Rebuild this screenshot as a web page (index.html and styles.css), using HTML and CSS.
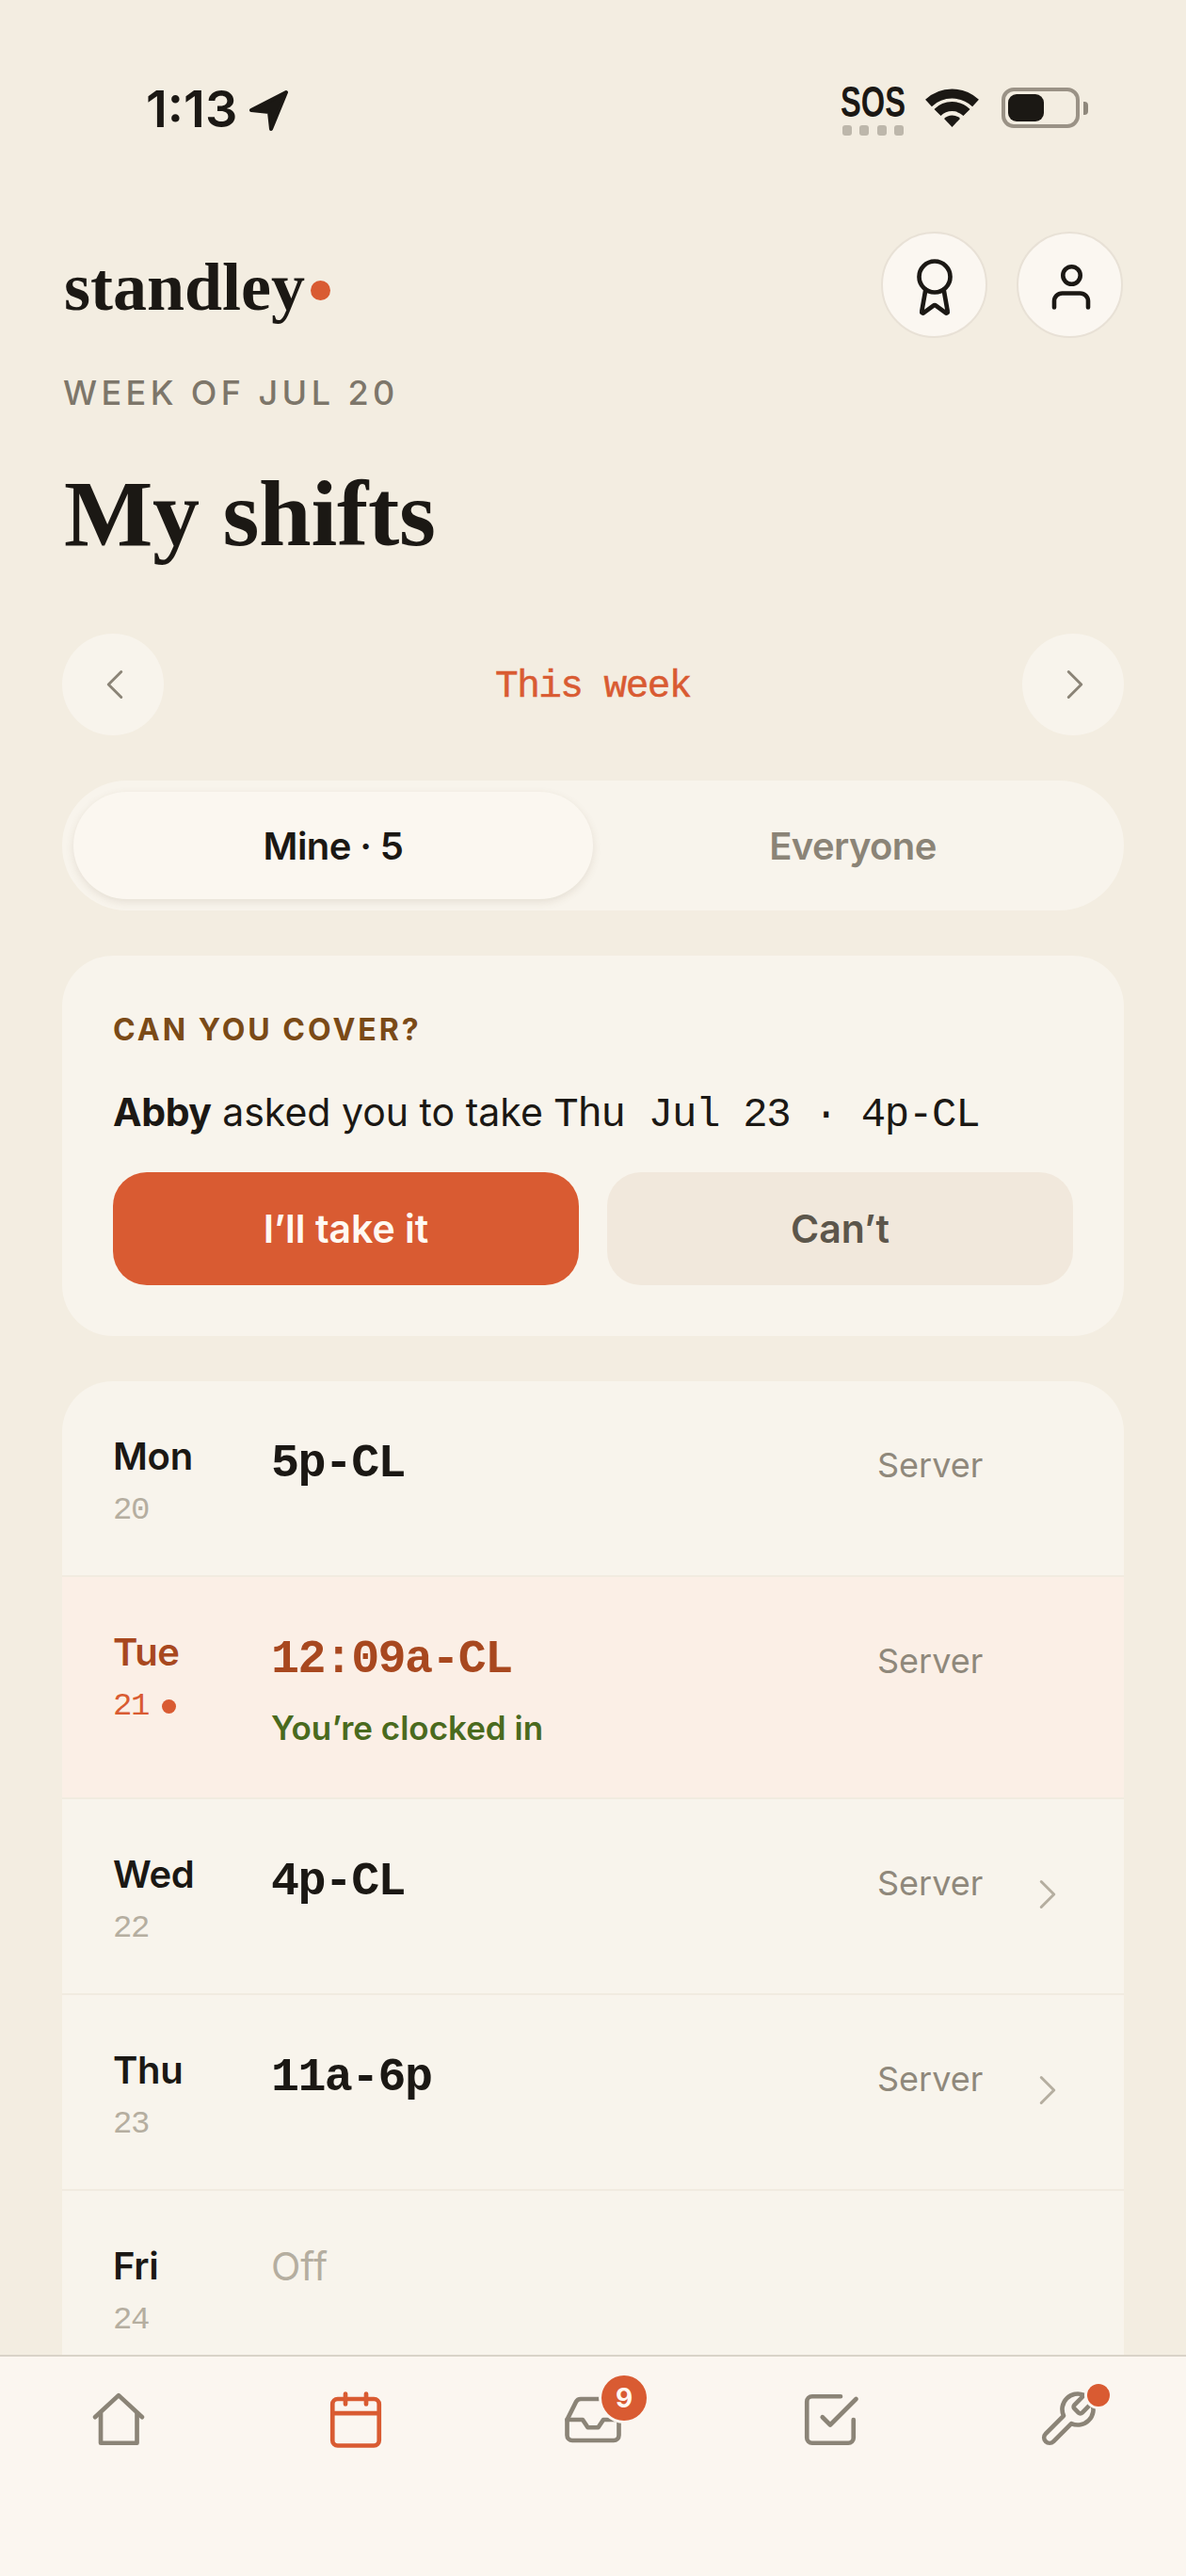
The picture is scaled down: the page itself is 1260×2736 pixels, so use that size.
FILE: index.html
```html
<!DOCTYPE html>
<html lang="en">
<head>
<meta charset="UTF-8">
<meta name="viewport" content="width=device-width, initial-scale=1.0">
<title>My shifts</title>
<link rel="stylesheet" href="styles.css">
</head>
<body>
<div class="screen">
    <div class="content">
        <!-- status bar -->
        <div class="status">
            <div class="status-left">
                <span class="clock">1:13</span>
                <svg class="loc" width="44" height="44" viewBox="0 0 44 44"><path d="M40 3 3 22l19 2 2 18z" fill="#1b1814" stroke="#1b1814" stroke-width="4" stroke-linejoin="round"/></svg>
            </div>
            <div class="status-right">
                <div class="sos">
                    <span class="sos-text">SOS</span>
                    <div class="sos-dots"><i></i><i></i><i></i><i></i></div>
                </div>
                <svg class="wifi" width="57" height="42" viewBox="0 0 57 42" fill="none" stroke="#1b1814" stroke-width="10">
                    <path d="M3.5 16.5A36.5 36.5 0 0 1 53.5 16.5"/>
                    <path d="M13 26.5A22 22 0 0 1 44 26.5"/>
                    <path d="M28.5 42 20 33A12 12 0 0 1 37 33z" fill="#1b1814" stroke="none"/>
                </svg>
                <div class="battery"><div class="battery-fill"></div></div>
                <div class="battery-cap"></div>
            </div>
        </div>

        <div class="page">
            <div class="header">
                <div class="logo">standley<span class="logo-dot"></span></div>
                <div class="header-btns">
                    <div class="round-btn">
                        <svg class="award" width="66" height="66" viewBox="0 0 24 24" fill="none" stroke="#1b1814" stroke-width="1.7" stroke-linecap="round" stroke-linejoin="round">
                            <circle cx="12" cy="8" r="6"/>
                            <path d="m15.5 12.9 1.5 8.5a.5.5 0 0 1-.8.5l-3.6-2.7a1 1 0 0 0-1.2 0l-3.6 2.7a.5.5 0 0 1-.8-.5l1.5-8.5"/>
                        </svg>
                    </div>
                    <div class="round-btn">
                        <svg width="66" height="66" viewBox="0 0 66 66" fill="none" stroke="#1b1814" stroke-width="4.6" stroke-linecap="round">
                            <circle cx="34.5" cy="22.5" r="9.2"/>
                            <path d="M16 56.500v-6.500a8.500 8.500 0 0 1 8.500-8.500h19a8.500 8.500 0 0 1 8.500 8.500v6.500"/>
                        </svg>
                    </div>
                </div>
            </div>

            <div class="eyebrow">WEEK OF JUL 20</div>
            <h1 class="title">My shifts</h1>

            <div class="week-nav">
                <div class="arrow-btn">
                    <svg width="54" height="54" viewBox="0 0 24 24" fill="none" stroke="#8b8477" stroke-width="1.33" stroke-linecap="round" stroke-linejoin="round"><path d="m15 18-6-6 6-6"/></svg>
                </div>
                <span class="week-label">This week</span>
                <div class="arrow-btn">
                    <svg width="54" height="54" viewBox="0 0 24 24" fill="none" stroke="#8b8477" stroke-width="1.33" stroke-linecap="round" stroke-linejoin="round"><path d="m9 18 6-6-6-6"/></svg>
                </div>
            </div>

            <div class="segment">
                <div class="seg-item active">Mine · 5</div>
                <div class="seg-item">Everyone</div>
            </div>

            <div class="cover-card">
                <div class="cover-title">CAN YOU COVER?</div>
                <p class="cover-text"><b>Abby</b> asked you to take <span class="mono">Thu Jul 23 · 4p-CL</span></p>
                <div class="cover-btns">
                    <div class="btn btn-primary">I’ll take it</div>
                    <div class="btn btn-soft">Can’t</div>
                </div>
            </div>

            <div class="list">
                <div class="row">
                    <div class="day"><div class="day-name">Mon</div><div class="day-num">20</div></div>
                    <div class="shift"><div class="time">5p-CL</div></div>
                    <div class="role">Server</div>
                    <div class="chev"></div>
                </div>
                <div class="row today">
                    <div class="day"><div class="day-name">Tue</div><div class="day-num">21<span class="today-dot"></span></div></div>
                    <div class="shift"><div class="time">12:09a-CL</div><div class="note">You’re clocked in</div></div>
                    <div class="role">Server</div>
                    <div class="chev"></div>
                </div>
                <div class="row">
                    <div class="day"><div class="day-name">Wed</div><div class="day-num">22</div></div>
                    <div class="shift"><div class="time">4p-CL</div></div>
                    <div class="role">Server</div>
                    <div class="chev"><svg width="54" height="54" viewBox="0 0 24 24" fill="none" stroke="#b5aea0" stroke-width="1.33" stroke-linecap="round" stroke-linejoin="round"><path d="m9 18 6-6-6-6"/></svg></div>
                </div>
                <div class="row">
                    <div class="day"><div class="day-name">Thu</div><div class="day-num">23</div></div>
                    <div class="shift"><div class="time">11a-6p</div></div>
                    <div class="role">Server</div>
                    <div class="chev"><svg width="54" height="54" viewBox="0 0 24 24" fill="none" stroke="#b5aea0" stroke-width="1.33" stroke-linecap="round" stroke-linejoin="round"><path d="m9 18 6-6-6-6"/></svg></div>
                </div>
                <div class="row">
                    <div class="day"><div class="day-name">Fri</div><div class="day-num">24</div></div>
                    <div class="shift"><div class="off">Off</div></div>
                    <div class="role"></div>
                    <div class="chev"></div>
                </div>
            </div>
        </div>
    </div>

    <!-- bottom tabs -->
    <div class="tabs">
        <div class="tab">
            <svg width="66" height="66" viewBox="0 0 24 24" fill="none" stroke="#8b8477" stroke-width="1.7" stroke-linecap="round" stroke-linejoin="round"><path d="M2.900 11 12 2.600 21.100 11"/><path d="M5.100 9.500V21h14V9.500"/></svg>
        </div>
        <div class="tab">
            <svg width="66" height="66" viewBox="0 0 24 24" fill="none" stroke="#d95b32" stroke-width="1.7" stroke-linecap="round" stroke-linejoin="round"><rect x="3" y="4" width="18" height="18" rx="2"/><path d="M16 2v4M8 2v4M3 9.500h18"/></svg>
        </div>
        <div class="tab">
            <svg width="66" height="66" viewBox="0 0 24 24" fill="none" stroke="#8b8477" stroke-width="1.7" stroke-linecap="round" stroke-linejoin="round"><path d="M22 12h-6l-2 3h-4l-2-3H2"/><path d="M5.450 5.110 2 12v6a2 2 0 0 0 2 2h16a2 2 0 0 0 2-2v-6l-3.450-6.890A2 2 0 0 0 16.760 4H7.240a2 2 0 0 0-1.790 1.110z"/></svg>
            <span class="badge">9</span>
        </div>
        <div class="tab">
            <svg width="66" height="66" viewBox="0 0 24 24" fill="none" stroke="#8b8477" stroke-width="1.7" stroke-linecap="round" stroke-linejoin="round"><path d="m9 11 3 3L22 4"/><path d="M21 12v7a2 2 0 0 1-2 2H5a2 2 0 0 1-2-2V5a2 2 0 0 1 2-2h11"/></svg>
        </div>
        <div class="tab">
            <svg width="66" height="66" viewBox="0 0 24 24" fill="none" stroke="#8b8477" stroke-width="1.7" stroke-linecap="round" stroke-linejoin="round"><path d="M14.700 6.300a1 1 0 0 0 0 1.400l1.600 1.600a1 1 0 0 0 1.400 0l3.770-3.770a6 6 0 0 1-7.940 7.940l-6.910 6.910a2.120 2.120 0 0 1-3-3l6.910-6.910a6 6 0 0 1 7.940-7.940l-3.760 3.760z"/></svg>
            <span class="tab-dot"></span>
        </div>
    </div>
</div>
</body>
</html>
```

FILE: styles.css
```css
*{
    box-sizing: border-box;
}
body{
    margin: 0;
    background: #f3ede1;
    color: #1b1814;
    font-family: Inter, "Liberation Sans", sans-serif;
}
.screen{
    width: 1260px;
    height: 2736px;
    display: flex;
    flex-direction: column;
    overflow: hidden;
}
.content{
    flex: 1;
    min-height: 0;
    overflow: hidden;
}

/* status bar */
.status{
    height: 246px;
    padding: 0 104px 0 155px;
    display: flex;
    justify-content: space-between;
    align-items: flex-start;
}
.status-left{
    display: flex;
    align-items: center;
    gap: 12px;
    padding-top: 88px;
}
.clock{
    font-size: 54px;
    font-weight: 600;
    line-height: 56px;
    letter-spacing: 0;
}
.loc{
    margin-top: 2px;
}
.status-right{
    display: flex;
    align-items: flex-start;
    padding-top: 92px;
}
.sos{
    width: 69px;
    margin-right: 21px;
}
.sos-text{
    display: block;
    width: 97px;
    font-family: "Liberation Sans", sans-serif;
    font-size: 46px;
    font-weight: 700;
    line-height: 33px;
    transform: scaleX(0.71);
    transform-origin: left center;
}
.sos-dots{
    display: flex;
    justify-content: space-between;
    margin-top: 8px;
    padding: 0 2px;
}
.sos-dots i{
    width: 10px;
    height: 11px;
    border-radius: 3px;
    background: #bdb7ab;
}
.wifi{
    margin: 1px 24px 0 0;
}
.battery{
    width: 83px;
    height: 43px;
    margin-top: 1px;
    padding: 3px;
    border: 4px solid #9a9286;
    border-radius: 13px;
}
.battery-fill{
    width: 38px;
    height: 29px;
    border-radius: 9px;
    background: #1b1814;
}
.battery-cap{
    width: 5px;
    height: 14px;
    margin: 16px 0 0 4px;
    border-radius: 0 4px 4px 0;
    background: #8f887c;
}

.page{
    padding: 0 66px;
}

/* header */
.header{
    display: flex;
    justify-content: space-between;
    align-items: flex-start;
    height: 113px;
}
.logo{
    display: flex;
    align-items: center;
    margin-top: 3px;
    font-family: "Liberation Serif", serif;
    font-size: 72px;
    font-weight: 700;
    line-height: 113px;
    padding-left: 2px;
}
.logo-dot{
    width: 21px;
    height: 21px;
    margin: 6px 0 0 6px;
    border-radius: 50%;
    background: #d95b32;
}
.header-btns{
    display: flex;
    gap: 31px;
    margin-right: 1px;
}
.round-btn{
    width: 113px;
    height: 113px;
    display: flex;
    align-items: center;
    justify-content: center;
    border: 2px solid #e8e1d6;
    border-radius: 50%;
    background: #fbf7f1;
}
.award{
    margin-top: 5px;
}
.eyebrow{
    margin-top: 36px;
    font-size: 36px;
    font-weight: 500;
    line-height: 44px;
    letter-spacing: 4.4px;
    color: #7d766a;
    padding-left: 1px;
}
.title{
    margin: 52px 0 0;
    font-family: "Liberation Serif", serif;
    font-size: 100px;
    font-weight: 700;
    line-height: 110px;
    letter-spacing: -0.3px;
    padding-left: 2px;
}

/* week switch */
.week-nav{
    display: flex;
    justify-content: space-between;
    align-items: center;
    margin-top: 72px;
}
.arrow-btn{
    width: 108px;
    height: 108px;
    display: flex;
    align-items: center;
    justify-content: center;
    border-radius: 50%;
    background: #f8f4ec;
}
.arrow-btn svg{
    margin-left: 3px;
}
.week-label{
    padding-top: 3px;
    font-family: "Liberation Mono", monospace;
    font-size: 41px;
    letter-spacing: -1.5px;
    -webkit-text-stroke: 0.5px #d95b32;
    color: #d95b32;
}
.segment{
    display: flex;
    height: 138px;
    margin-top: 48px;
    padding: 12px;
    border-radius: 69px;
    background: #f8f4ec;
}
.seg-item{
    flex: 1;
    display: flex;
    align-items: center;
    justify-content: center;
    border-radius: 58px;
    font-size: 40px;
    font-weight: 600;
    letter-spacing: -0.6px;
    color: #8b8477;
}
.seg-item.active{
    background: #fbf7f0;
    color: #1b1814;
    box-shadow: 0 3px 8px rgba(120, 100, 70, 0.14);
}

/* cover request */
.cover-card{
    margin-top: 48px;
    padding: 59px 54px 54px;
    border-radius: 54px;
    background: #f8f4ec;
}
.cover-title{
    font-size: 32px;
    font-weight: 700;
    line-height: 40px;
    letter-spacing: 3px;
    color: #7a4a17;
}
.cover-text{
    margin: 39px 0 0;
    font-size: 41px;
    line-height: 56px;
}
.cover-text b{
    font-weight: 700;
    letter-spacing: -0.4px;
}
.mono{
    font-family: "Liberation Mono", monospace;
    font-size: 44px;
    letter-spacing: -1.3px;
}
.cover-btns{
    display: flex;
    gap: 30px;
    margin-top: 33px;
}
.btn{
    flex: 1;
    height: 120px;
    display: flex;
    align-items: center;
    justify-content: center;
    border-radius: 36px;
    font-size: 41px;
    font-weight: 600;
}
.btn-primary{
    background: #d95b32;
    color: #fff9f2;
}
.btn-soft{
    background: #f1e8dc;
    color: #5c564b;
}

/* shift list */
.list{
    margin-top: 48px;
    border-radius: 54px 54px 0 0;
    background: #f8f4ec;
    overflow: hidden;
}
.row{
    display: flex;
    padding: 54px 54px 46px;
    border-bottom: 2px solid #f1ebe0;
}
.row.today{
    background: #fbefe6;
}
.day{
    width: 168px;
    flex: none;
}
.day-name{
    font-size: 40px;
    font-weight: 600;
    line-height: 52px;
    letter-spacing: -0.3px;
}
.day-num{
    display: flex;
    align-items: center;
    margin-top: 8px;
    font-family: "Liberation Mono", monospace;
    font-size: 34px;
    letter-spacing: -1.4px;
    line-height: 46px;
    color: #b5aea0;
}
.today .day-name{
    color: #a8481f;
}
.today .day-num{
    color: #d95b32;
}
.today-dot{
    width: 15px;
    height: 15px;
    margin-left: 14px;
    border-radius: 50%;
    background: #d95b32;
}
.shift{
    flex: 1;
}
.time{
    font-family: "Liberation Mono", monospace;
    font-size: 50px;
    font-weight: 700;
    letter-spacing: -1.6px;
    line-height: 68px;
}
.today .time{
    color: #a8481f;
}
.note{
    margin-top: 10px;
    font-size: 35px;
    font-weight: 600;
    line-height: 56px;
    color: #4a6a1e;
}
.off{
    font-size: 41px;
    line-height: 52px;
    color: #b5aea0;
}
.role{
    width: 110px;
    font-size: 36px;
    line-height: 70px;
    color: #8f887b;
}
.chev{
    width: 54px;
    height: 54px;
    margin: 20px 0 0 44px;
}

/* bottom tabs */
.tabs{
    flex: none;
    height: 235px;
    display: grid;
    grid-template-columns: repeat(5, 1fr);
    border-top: 2px solid #d9d3c8;
    background: #fbf6f0;
}
.tab{
    position: relative;
    display: flex;
    justify-content: center;
    padding-top: 34px;
}
.badge{
    position: absolute;
    top: 20px;
    left: 135px;
    width: 48px;
    height: 48px;
    display: flex;
    align-items: center;
    justify-content: center;
    border-radius: 50%;
    background: #d95b32;
    box-shadow: 0 0 0 3px #fbf6f0;
    color: #fff9f2;
    font-size: 28px;
    font-weight: 700;
}
.tab-dot{
    position: absolute;
    top: 29px;
    left: 147px;
    width: 24px;
    height: 24px;
    border-radius: 50%;
    background: #d95b32;
    box-shadow: 0 0 0 3px #fbf6f0;
}
```
